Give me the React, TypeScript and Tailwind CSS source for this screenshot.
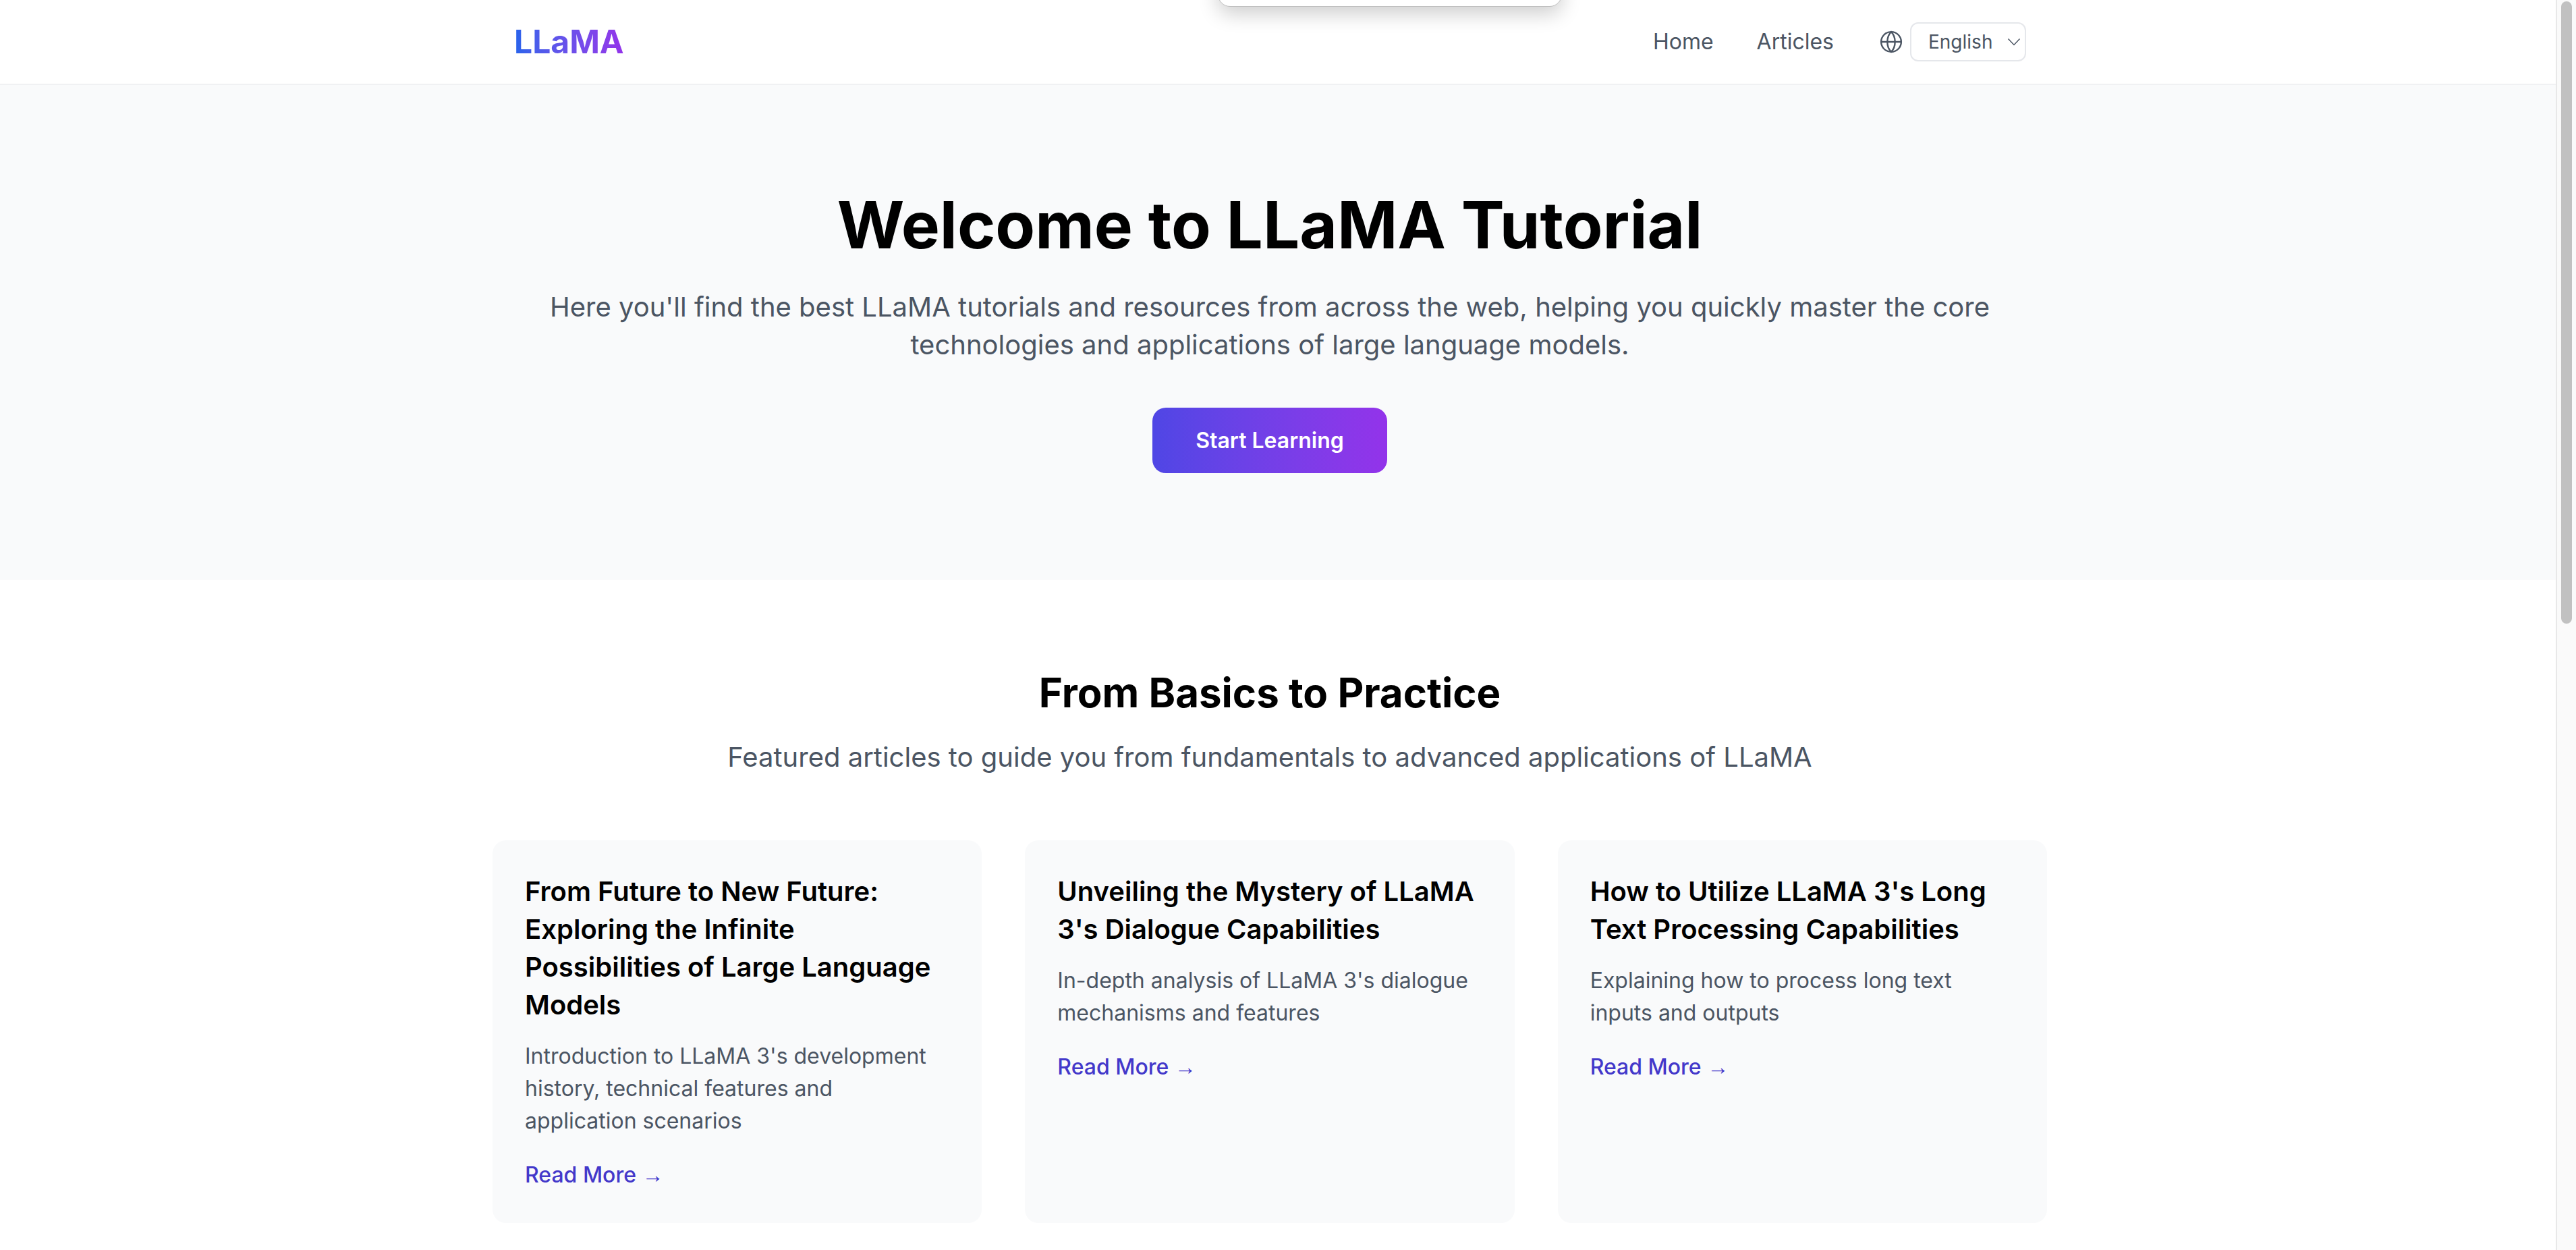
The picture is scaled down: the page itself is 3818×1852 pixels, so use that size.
const articles = [
  {
    title: "From Future to New Future: Exploring the Infinite Possibilities of Large Language Models",
    desc: "Introduction to LLaMA 3's development history, technical features and application scenarios",
  },
  {
    title: "Unveiling the Mystery of LLaMA 3's Dialogue Capabilities",
    desc: "In-depth analysis of LLaMA 3's dialogue mechanisms and features",
  },
  {
    title: "How to Utilize LLaMA 3's Long Text Processing Capabilities",
    desc: "Explaining how to process long text inputs and outputs",
  },
];

const App = () => {
  return (
    <div className="flex h-[1852px] w-full overflow-hidden bg-white font-['Inter',sans-serif]">
      <div className="relative min-w-0 flex-1 overflow-hidden">
        {/* popover peeking in from the top */}
        <div className="absolute left-[1805px] top-[-40px] h-[50px] w-[510px] rounded-[18px] border border-[#bdbdbd] bg-white shadow-[0_10px_30px_rgba(0,0,0,0.2)]" />

        {/* Header */}
        <header className="h-[126px] border-b-2 border-[#f0f1f3] bg-white">
          <div className="ml-[730px] flex h-[124px] w-[2304px] items-center justify-between pl-[32px] pr-[31px]">
            <a className="bg-gradient-to-r from-[#2563eb] to-[#9333ea] bg-clip-text text-[48px] font-bold text-transparent">
              LLaMA
            </a>
            <nav className="flex items-center text-[32px] text-[#4b5563]">
              <a className="mr-[64px]">Home</a>
              <a className="mr-[68px]">Articles</a>
              <svg
                width="34"
                height="34"
                viewBox="0 0 24 24"
                fill="none"
                stroke="currentColor"
                strokeWidth="1.7"
                className="mr-[11px]"
              >
                <circle cx="12" cy="12" r="10.5" />
                <path d="M1.5 12h21M12 1.5c3 3 4 6.5 4 10.5s-1 7.5-4 10.5c-3-3-4-6.5-4-10.5s1-7.5 4-10.5z" />
              </svg>
              <div className="flex h-[58px] w-[172px] items-center justify-between rounded-[12px] border-2 border-[#e5e7eb] pl-[25px] pr-[6px] text-[28px]">
                <span>English</span>
                <svg width="20" height="12" viewBox="0 0 20 12" fill="none" stroke="currentColor" strokeWidth="1.5">
                  <path d="M1.5 1.5l8.5 9 8.5-9" />
                </svg>
              </div>
            </nav>
          </div>
        </header>

        {/* Hero */}
        <section className="h-[733px] bg-[#f9fafb] pt-[147px]">
          <div className="ml-[730px] flex w-[2304px] flex-col items-center text-center">
            <h1 className="text-[96px] font-bold leading-[120px] text-black">Welcome to LLaMA Tutorial</h1>
            <p className="mt-[34px] w-[2160px] text-[40px] leading-[56px] text-[#4b5563]">
              Here you'll find the best LLaMA tutorials and resources from across the web, helping you quickly master
              the core technologies and applications of large language models.
            </p>
            <button className="mt-[65px] h-[97px] w-[348px] rounded-[20px] bg-gradient-to-r from-[#4f46e5] to-[#9333ea] text-[32px] font-semibold text-white">
              Start Learning
            </button>
          </div>
        </section>

        {/* Articles */}
        <section className="pt-[123px]">
          <div className="ml-[730px] flex w-[2304px] flex-col items-center">
            <h2 className="text-[60px] font-bold leading-[88px] text-black">From Basics to Practice</h2>
            <p className="mt-[20px] text-[40px] leading-[64px] text-[#4b5563]">
              Featured articles to guide you from fundamentals to advanced applications of LLaMA
            </p>
            <div className="mt-[91px] grid w-full grid-cols-3 gap-[64px]">
              {articles.map((a) => (
                <article key={a.title} className="h-[567px] rounded-[20px] bg-[#f9fafb] px-[48px] pt-[48px]">
                  <h3 className="text-[40px] font-semibold leading-[56px] text-black">{a.title}</h3>
                  <p className="mt-[24px] text-[32px] leading-[48px] text-[#4b5563]">{a.desc}</p>
                  <a className="mt-[32px] block text-[32px] leading-[48px] font-medium text-[#4338ca]">
                    Read More <span className="font-['Liberation_Sans']">→</span>
                  </a>
                </article>
              ))}
            </div>
          </div>
        </section>
      </div>

      {/* Scrollbar */}
      <div className="h-full w-[30px] shrink-0 border-l-2 border-[#e8e8e8] bg-[#fafafa] pl-[6px] pt-[2px]">
        <div className="h-[922px] w-[16px] rounded-full bg-[#c1c1c1]" />
      </div>
    </div>
  );
};

export default App;
